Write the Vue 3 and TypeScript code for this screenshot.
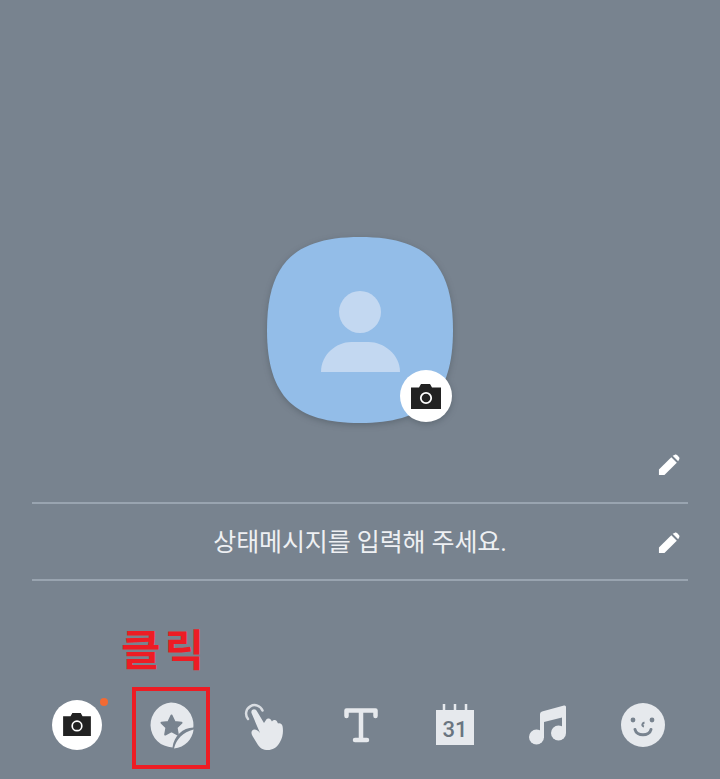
<script setup lang="ts">
// profile edit screen with the sticker shortcut called out
const statusHint = '상태메시지를 입력해 주세요.';
const clickLabel = '클릭';
</script>

<template>
  <main class="screen">
    <section class="avatar-area">
      <div class="avatar">
        <svg class="squircle" viewBox="0 0 186 186" width="186" height="186">
          <path
            d="M93 0C158 0 186 26 186 93C186 160 158 186 93 186C28 186 0 160 0 93C0 26 28 0 93 0Z"
            fill="#93bde8"
          />
          <circle cx="93" cy="75" r="21" fill="#c3d8f1" />
          <path d="M54 135C54 117 70 105 84 105H102C116 105 133 117 133 135Z" fill="#c3d8f1" />
        </svg>
        <span class="avatar-camera">
          <svg viewBox="0 0 32 27" width="32" height="27">
            <path d="M1 4.5H9L11 1H20L22 4.5H31V26H1Z" fill="#222" />
            <circle cx="16" cy="15" r="5.2" fill="none" stroke="#fff" stroke-width="1.8" />
          </svg>
        </span>
      </div>
    </section>

    <section class="fields">
      <div class="field name-field">
        <svg class="pencil" viewBox="0 0 24 24" width="22" height="22">
          <path d="M1 23V17L14.5 3.5L20.5 9.5L7 23Z" fill="#fff" />
          <path d="M16 2L18 1C19 .4 20 .4 20.8 1.2L22.8 3.2C23.6 4 23.6 5 23 6L22 8Z" fill="#fff" />
        </svg>
      </div>
      <div class="field status-field">
        <span class="hint">{{ statusHint }}</span>
        <svg class="pencil" viewBox="0 0 24 24" width="22" height="22">
          <path d="M1 23V17L14.5 3.5L20.5 9.5L7 23Z" fill="#fff" />
          <path d="M16 2L18 1C19 .4 20 .4 20.8 1.2L22.8 3.2C23.6 4 23.6 5 23 6L22 8Z" fill="#fff" />
        </svg>
      </div>
    </section>

    <div class="callout">
      <span class="click-label">{{ clickLabel }}</span>
    </div>

    <nav class="toolbar">
      <span class="tool camera-tool">
        <svg viewBox="0 0 32 27" width="30" height="25">
          <path d="M1 4.5H9L11 1H20L22 4.5H31V26H1Z" fill="#222" />
          <circle cx="16" cy="15" r="5.2" fill="none" stroke="#fff" stroke-width="1.8" />
        </svg>
        <i class="dot"></i>
      </span>

      <span class="tool sticker-tool">
        <svg viewBox="0 0 48 48" width="48" height="48">
          <path
            d="M24 1.5A22.5 22.5 0 0 1 46.3 26.5C36 26.5 27 35 25.5 46.4A22.5 22.5 0 0 1 24 1.5Z"
            fill="#e6e9ed"
          />
          <path
            d="M24.5 14.5L27.6 21L34.5 21.8L29.6 26.6L30.8 33.5L24.5 30.2L18.2 33.5L19.4 26.6L14.5 21.8L21.4 21Z"
            fill="#78838f"
            stroke="#78838f"
            stroke-width="2"
            stroke-linejoin="round"
          />
          <path d="M27 47.5C29 38.5 36 31 46.6 28.5C45.5 38 38 46.5 27 47.5Z" fill="#e6e9ed" />
        </svg>
      </span>

      <span class="tool hand-tool">
        <svg viewBox="0 0 60 60" width="60" height="60">
          <path
            d="M13 24A8.5 8.5 0 1 1 27.5 15.5"
            fill="none"
            stroke="#d9dde2"
            stroke-width="2.5"
            stroke-linecap="round"
          />
          <path
            d="M16.5 18C15.5 14.5 19.5 13 21.5 15.5L29 28L31 25C32 23 35 23 36 25L37 26.5C38 24.5 41 24.5 42 26.5L43 28.5C45 27.5 47 29 47.5 31C48.5 36 48 42 45 47C42 53 37 55 33 55C28 55 25 53 23 50L17.5 41C15.5 38 16.5 34.5 19.5 34.5C21.5 34.5 23.5 36 25 38Z"
            fill="#e6e9ed"
          />
        </svg>
      </span>

      <span class="tool">
        <svg viewBox="0 0 36 36" width="36" height="36">
          <path
            d="M3.5 9V3.5H32.5V9M18 3.5V33M12 33H24"
            fill="none"
            stroke="#e6e9ed"
            stroke-width="4.5"
            stroke-linecap="round"
            stroke-linejoin="round"
          />
        </svg>
      </span>

      <span class="tool">
        <svg viewBox="0 0 40 42" width="40" height="42">
          <path d="M1 6H39V41H1Z" fill="#e6e9ed" />
          <path d="M9 0V6M20 0V6M31 0V6" stroke="#e6e9ed" stroke-width="2.5" />
          <text x="20" y="33" class="cal-day">31</text>
        </svg>
      </span>

      <span class="tool note-tool">
        <svg viewBox="0 0 38 41" width="38" height="41">
          <path d="M11 34V10Q11 8 13 7.5L35 1.5Q37 1 37 3V29H33V13.5L15 18V34Z" fill="#e6e9ed" />
          <circle cx="7.5" cy="33" r="7.5" fill="#e6e9ed" />
          <circle cx="29.5" cy="29" r="7.5" fill="#e6e9ed" />
        </svg>
      </span>

      <span class="tool smile-tool">
        <svg viewBox="0 0 44 44" width="44" height="44">
          <circle cx="22" cy="22" r="22" fill="#e6e9ed" />
          <circle cx="12" cy="17" r="2.4" fill="#78838f" />
          <circle cx="31" cy="17" r="2.4" fill="#78838f" />
          <path d="M23.5 19.5C21 20 20.5 23 23 23.5" fill="none" stroke="#78838f" stroke-width="2" />
          <path
            d="M14 26.5C15.5 33.5 28.5 33.5 30 26.5"
            fill="none"
            stroke="#78838f"
            stroke-width="3"
            stroke-linecap="round"
          />
        </svg>
      </span>

      <i class="highlight"></i>
    </nav>
  </main>
</template>

<style scoped>
.screen {
  width: 720px;
  height: 779px;
  background: #78838f;
  font-family: Roboto, "Noto Sans CJK KR", sans-serif;
  display: flex;
  flex-direction: column;
  overflow: hidden;
}
.avatar-area {
  display: flex;
  justify-content: center;
  padding-top: 237px;
  height: 189px;
}
.avatar {
  position: relative;
  width: 186px;
  height: 186px;
  filter: drop-shadow(0 2px 3px rgba(50, 60, 70, 0.35));
}
.squircle {
  display: block;
}
.avatar-camera {
  position: absolute;
  left: 133px;
  top: 133px;
  width: 52px;
  height: 52px;
  border-radius: 50%;
  background: #fff;
  display: flex;
  align-items: center;
  justify-content: center;
}
.fields {
  margin: 0 32px;
}
.field {
  position: relative;
  border-bottom: 2px solid #99a4b0;
  display: flex;
  align-items: center;
  justify-content: center;
}
.name-field {
  height: 76px;
}
.status-field {
  height: 75px;
}
.hint {
  color: #eef0f3;
  font-size: 25px;
  letter-spacing: -0.1px;
  margin-bottom: 3px;
}
.pencil {
  position: absolute;
  right: 8px;
  top: 28px;
}
.callout {
  height: 44px;
  margin-top: 47px;
  padding-left: 121px;
}
.click-label {
  color: #ed1c24;
  font-size: 43px;
  font-weight: 700;
  line-height: 46px;
  letter-spacing: 4px;
}
.toolbar {
  position: relative;
  display: grid;
  grid-template-columns: repeat(7, 94.5px);
  padding-left: 30px;
  margin-top: 19px;
  height: 70px;
}
.tool {
  position: relative;
  display: flex;
  align-items: center;
  justify-content: center;
  height: 67px;
}
.camera-tool::before {
  content: '';
  position: absolute;
  width: 50px;
  height: 50px;
  border-radius: 50%;
  background: #fff;
}
.camera-tool svg {
  position: relative;
}
.sticker-tool svg,
.hand-tool svg,
.smile-tool svg {
  margin-right: 2px;
}
.note-tool svg {
  margin-right: 4px;
}
.dot {
  position: absolute;
  left: 70px;
  top: 7px;
  width: 8px;
  height: 8px;
  border-radius: 50%;
  background: #f26a33;
}
.highlight {
  position: absolute;
  left: 132px;
  top: -4px;
  width: 70px;
  height: 74px;
  border: 4px solid #ed1c24;
}
.cal-day {
  fill: #6a7580;
  font-family: Roboto, sans-serif;
  font-size: 22px;
  font-weight: 500;
  text-anchor: middle;
}
</style>
